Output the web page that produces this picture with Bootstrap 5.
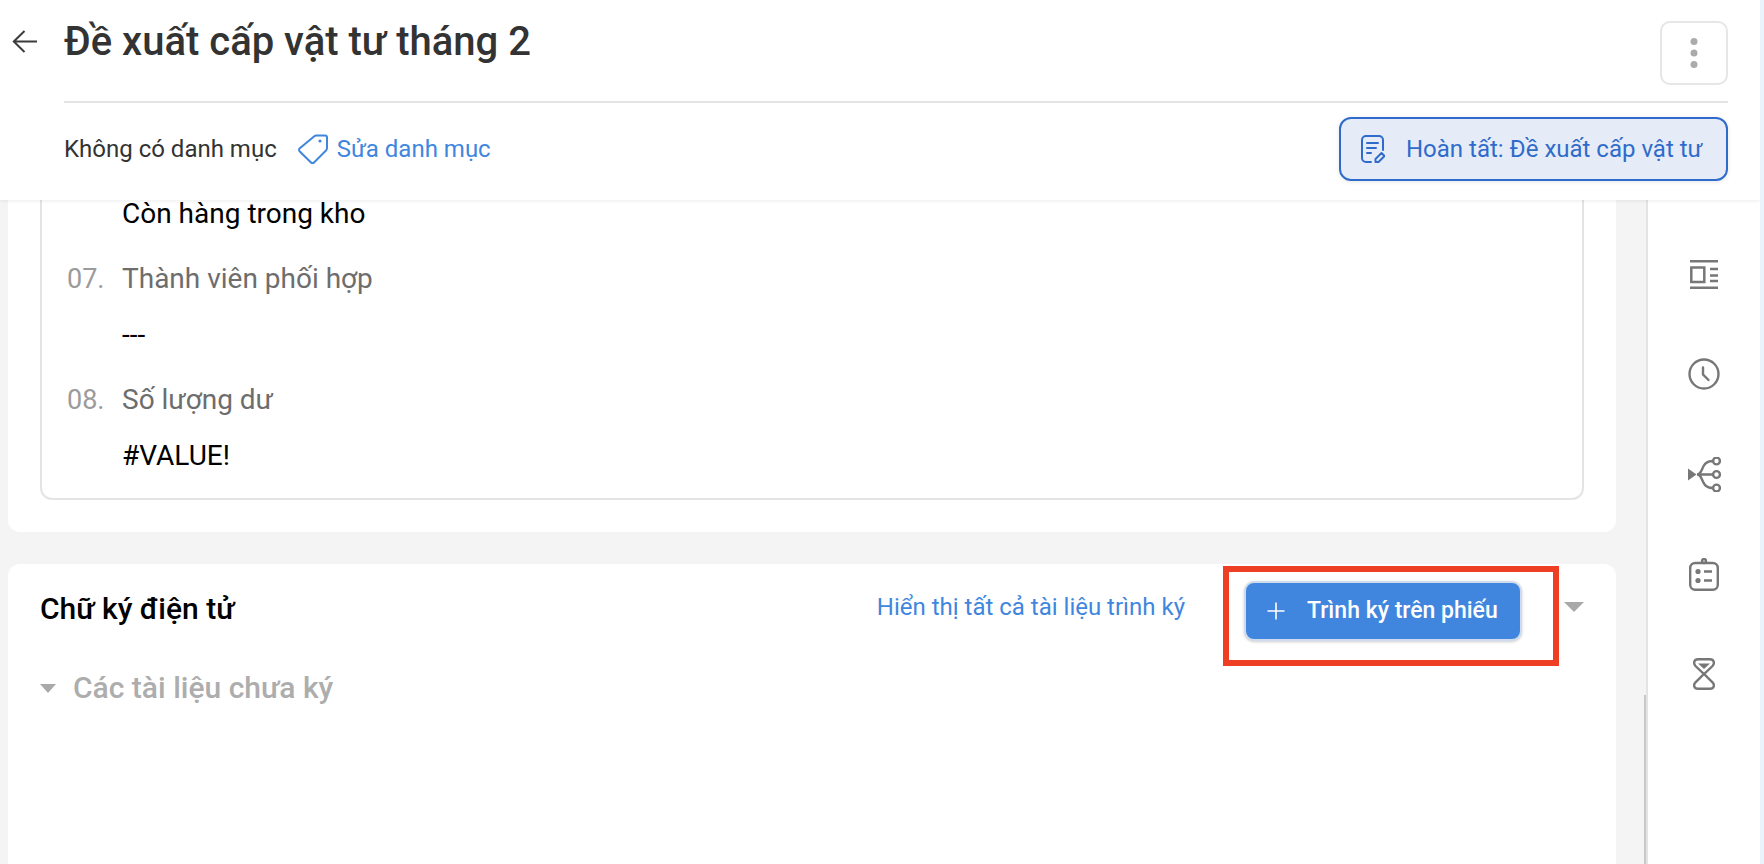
<!DOCTYPE html>
<html lang="vi">
<head>
<meta charset="utf-8">
<title>Đề xuất cấp vật tư tháng 2</title>
<link href="https://cdn.jsdelivr.net/npm/bootstrap@5.3.0/dist/css/bootstrap.min.css" rel="stylesheet">
<style>
html,body{height:100%;overflow:hidden}
body{font-family:Roboto,"Liberation Sans",sans-serif;background:#eaf2fb;color:#000}
.app-shell{width:1760px;height:864px;background:#f4f4f4;position:relative;overflow:hidden}
.top-head{position:absolute;left:0;top:0;width:1760px;height:200px;background:#fff;box-shadow:0 1px 4px rgba(0,0,0,.08);z-index:5}
.back-zone{width:64px;padding:30px 0 0 12px}
.head-main{width:1664px}
.head-row{height:103px;border-bottom:2px solid #e4e4e4}
.page-title{font-size:40px;font-weight:500;color:#333;line-height:48px;margin:18px 0 0}
.more-btn{width:68px;height:64px;margin-top:21px;border:2px solid #e6e6e6;border-radius:10px;background:#fff;padding:0}
.cat-row{height:92px}
.cat-text{font-size:24px;color:#333}
.tag-ico{margin:0 9px 0 21px}
.cat-link{font-size:24px;color:#3f86de;text-decoration:none}
.done-btn{width:389px;height:64px;border:2px solid #2f6bcb;border-radius:12px;background:#e6ecf7;color:#2f6bcb;font-size:24px;padding:0 0 0 20px;box-shadow:0 1px 4px rgba(0,0,0,.1)}
.done-label{margin-left:21px}
.main-col{width:1646px;height:864px;padding-left:8px;padding-right:30px}
.side-col{width:114px;height:864px;background:#fff;border-left:2px solid #e4e4e4;position:relative;padding-top:224px}
.side-ico{height:100px}
.scroll-thumb{position:absolute;left:-4px;top:695px;width:2px;height:169px;background:#c8c8c8}
.sheet{background:#fff;border-radius:12px}
.sheet-one{height:532px;padding:0 32px}
.inner-box{height:500px;padding-top:194px;border:2px solid #e4e4e4;border-radius:0 0 12px 12px}
.sheet-two{height:400px;margin-top:32px;padding:2px 32px 0}
.field-val{font-size:28px;line-height:36px;margin-left:80px}
.field-head{display:flex;font-size:28px;line-height:36px;color:#6d6d6d;margin-top:29px}
.field-val-gap{margin-top:20px}
.field-no{width:55px;margin-left:25px;color:#9b9b9b;font-size:27px}
.sig-title{font-size:30px;line-height:36px;font-weight:500;color:#000;margin:25px 0 0}
.sig-link{font-size:24px;line-height:28px;color:#3f86de;text-decoration:none;margin-top:27px}
.highlight-box{width:336px;height:100px;border:6px solid #ee3f24;margin-left:38px;margin-right:5px;padding:9px 31px 18px 15px}
.sign-btn{width:278px;height:60px;background:#4086de;border:2px solid #cfdcee;border-radius:10px;color:#fff;font-size:23px;font-weight:500;box-shadow:0 1px 3px rgba(0,0,0,.2);padding:0 0 0 21px}
.sign-label{margin-left:22px}
.caret-big{width:0;height:0;margin-top:36px;border-left:10px solid transparent;border-right:10px solid transparent;border-top:10px solid #a9a9a9}
.sub-row{margin-top:4px}
.caret-small{width:0;height:0;border-left:8px solid transparent;border-right:8px solid transparent;border-top:9px solid #a9a9a9}
.sub-title{font-size:30px;line-height:36px;font-weight:500;color:#adadad;margin:0 0 0 17px}
</style>
</head>
<body>
<div class="app-shell d-flex">
  <header class="top-head d-flex">
    <div class="back-zone">
      <svg class="d-block" width="25" height="23" viewBox="0 0 25 23" fill="none" stroke="#3c3c3c" stroke-width="2"><path d="M25 11.500H2M12.500 1 1.800 11.500 12.500 22"/></svg>
    </div>
    <div class="head-main">
      <div class="head-row d-flex justify-content-between align-items-start">
        <h1 class="page-title">Đề xuất cấp vật tư tháng 2</h1>
        <button class="more-btn d-flex align-items-center justify-content-center" type="button" aria-label="Thêm">
          <svg width="8" height="32" viewBox="0 0 8 32" fill="#ababab"><circle cx="4" cy="4.500" r="3.500"/><circle cx="4" cy="16" r="3.500"/><circle cx="4" cy="27.500" r="3.500"/></svg>
        </button>
      </div>
      <div class="cat-row d-flex justify-content-between align-items-center">
        <div class="d-flex align-items-center">
          <span class="cat-text">Không có danh mục</span>
          <svg class="tag-ico" width="30" height="30" viewBox="0 0 30 30" fill="none" stroke="#3f86de" stroke-width="2"><path d="M1.500 14.500 16 2.500Q17 1.500 18.500 1.500H27Q29 1.500 29 3.500V14Q29 15.500 28 16.500L16 28.500Q14.500 30 13 28.500L1.800 17.500Q.5 16 1.500 14.500Z"/><circle cx="22" cy="7" r="1.600" fill="#3f86de" stroke="none"/></svg>
          <a class="cat-link" href="#">Sửa danh mục</a>
        </div>
        <button class="done-btn d-flex align-items-center" type="button">
          <svg width="24" height="28" viewBox="0 0 24 28" fill="none" stroke="#2f6bcb" stroke-width="2" stroke-linecap="round"><path d="M10 27H5a4 4 0 0 1-4-4V5a4 4 0 0 1 4-4h13a4 4 0 0 1 4 4v10"/><path d="M6 8h11M6 13h9M6 18h4"/><path d="M14.500 27v-3l6-6 3 3-6 6Z" stroke-linejoin="round"/></svg>
          <span class="done-label">Hoàn tất: Đề xuất cấp vật tư</span>
        </button>
      </div>
    </div>
  </header>

  <main class="main-col">
    <section class="sheet sheet-one">
      <div class="inner-box">
        <div class="field-val">Còn hàng trong kho</div>
        <div class="field-head">
          <span class="field-no">07.</span><span>Thành viên phối hợp</span>
        </div>
        <div class="field-val field-val-gap">---</div>
        <div class="field-head">
          <span class="field-no">08.</span><span>Số lượng dư</span>
        </div>
        <div class="field-val field-val-gap">#VALUE!</div>
      </div>
    </section>
    <section class="sheet sheet-two">
      <div class="d-flex align-items-start">
        <h2 class="sig-title me-auto">Chữ ký điện tử</h2>
        <a class="sig-link" href="#">Hiển thị tất cả tài liệu trình ký</a>
        <div class="highlight-box">
          <button class="sign-btn d-flex align-items-center" type="button">
            <svg width="18" height="18" viewBox="0 0 18 18" stroke="#fff" stroke-width="1.600"><path d="M9 .5v17M.5 9h17"/></svg>
            <span class="sign-label">Trình ký trên phiếu</span>
          </button>
        </div>
        <span class="caret-big"></span>
      </div>
      <div class="sub-row d-flex align-items-center">
        <span class="caret-small"></span>
        <h3 class="sub-title">Các tài liệu chưa ký</h3>
      </div>
    </section>
  </main>

  <aside class="side-col">
    <div class="scroll-thumb"></div>
    <div class="side-ico d-flex align-items-center justify-content-center">
      <svg width="28" height="29" viewBox="0 0 28 29" fill="none" stroke="#777" stroke-width="2.500"><path d="M0 1.300h28M0 27.700h28M20 9h8M20 15.500h8M20 21h8"/><rect x="1.300" y="7.500" width="13" height="14.500"/></svg>
    </div>
    <div class="side-ico d-flex align-items-center justify-content-center">
      <svg width="32" height="32" viewBox="0 0 32 32" fill="none" stroke="#777" stroke-width="2.400"><circle cx="16" cy="16" r="14.500"/><path d="M15 9.500v7l5.500 5.500" stroke-linecap="round"/></svg>
    </div>
    <div class="side-ico d-flex align-items-center justify-content-center">
      <svg width="33" height="35" viewBox="0 0 33 35" fill="none" stroke="#777" stroke-width="2.400"><path d="M0 11.500l8.500 6-8.500 6Z" fill="#777" stroke="none"/><path d="M9 17.500h16M9 17.500c7 0 3-13.500 16-13.500M9 17.500c7 0 3 13.500 16 13.500"/><circle cx="28.500" cy="4" r="3.400"/><circle cx="28.500" cy="17.500" r="3.400"/><circle cx="28.500" cy="31" r="3.400"/></svg>
    </div>
    <div class="side-ico d-flex align-items-center justify-content-center">
      <svg width="30" height="33" viewBox="0 0 30 33" fill="none" stroke="#777" stroke-width="2.400"><rect x="1.200" y="5" width="27.600" height="26.800" rx="5"/><circle cx="15" cy="3" r="2"/><circle cx="9" cy="13.500" r="2.600" fill="#777" stroke="none"/><circle cx="9" cy="22.500" r="2.600" fill="#777" stroke="none"/><path d="M15 13.500h8M15 22.500h8"/></svg>
    </div>
    <div class="side-ico d-flex align-items-center justify-content-center">
      <svg width="22" height="32" viewBox="0 0 22 32" fill="none" stroke="#777" stroke-width="2.400"><path d="M5 1.200h12c4 0 5 4 2.500 6.800L11 16 2.500 8C0 5.200 1 1.200 5 1.200ZM5 30.800h12c4 0 5-3.800 2.500-6.500L11 16l-8.500 8.300C0 27 1 30.800 5 30.800Z"/><path d="M5 5.500h12l-6 5.500Z" fill="#777" stroke="none"/></svg>
    </div>
  </aside>
</div>
<script src="https://cdn.jsdelivr.net/npm/bootstrap@5.3.0/dist/js/bootstrap.bundle.min.js"></script>
</body>
</html>
